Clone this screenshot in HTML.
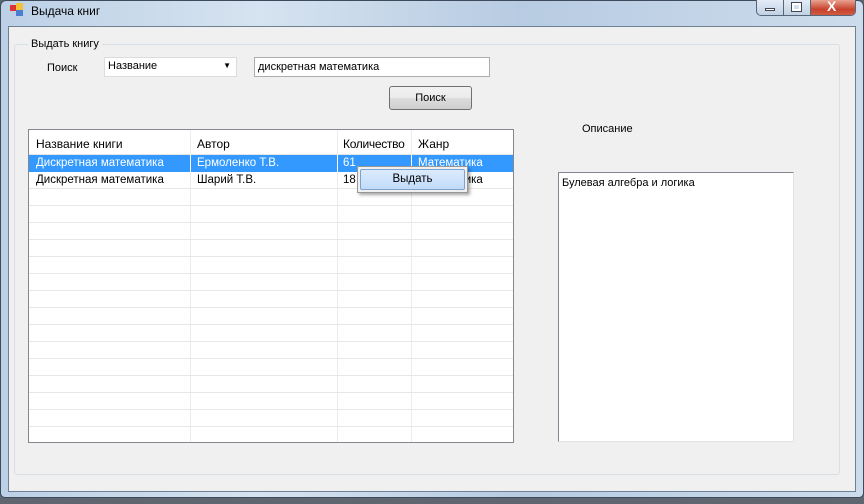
<!DOCTYPE html>
<html><head><meta charset="utf-8"><style>
*{box-sizing:border-box;margin:0;padding:0}
body{width:864px;height:504px;overflow:hidden;background:#5f6670;font-family:"Liberation Sans","Noto Sans CJK SC",sans-serif;font-size:11px;color:#000;position:relative}
.a{position:absolute}
.frame{left:0;top:0;width:864px;height:498px;border-radius:6px 6px 5px 5px;background:linear-gradient(90deg,#bcd0e6,#d6e3f0 30%,#b7cbe2 60%,#cddcec);border:1px solid #3d4b5c}
.client{left:8px;top:26px;width:848px;height:466px;background:#f0f0f0;border:1px solid #6f8093}
.tb{background:#fff;border:1px solid #abadb3}
.row{position:absolute;left:0;width:484px;height:17px;border-bottom:1px solid #e8e8e8;font-size:11.5px}
.vl{position:absolute;top:0;width:1px;height:312px;background:#ececec}
.h{font-size:12px}
</style></head><body>
<div class="a frame"></div>
<div class="a" style="left:10px;top:5px;width:6px;height:6px;background:#d33"></div>
<div class="a" style="left:16px;top:3px;width:7px;height:7px;background:#f2c23b"></div>
<div class="a" style="left:16px;top:10px;width:7px;height:6px;background:#4a7fd0"></div>
<div class="a" style="left:31px;top:4px;font-size:12px">Выдача книг</div>
<div class="a" style="left:756px;top:0;width:100px;height:16px;border:1px solid #55667a;border-top:none;border-radius:0 0 5px 5px;overflow:hidden;background:linear-gradient(#e3ecf6,#c0d1e3)">
<div class="a" style="left:26px;top:0;width:1px;height:16px;background:#55667a"></div>
<div class="a" style="left:53px;top:0;width:46px;height:16px;background:linear-gradient(#e8a28f,#c7412b 60%,#d3604a);border-left:1px solid #55667a"></div>
<div class="a" style="left:8px;top:8px;width:10px;height:3px;background:#fff;border:1px solid #445"></div>
<div class="a" style="left:35px;top:3px;width:9px;height:8px;border:2px solid #fff;outline:1px solid #445"></div>
<div class="a" style="left:70px;top:-2px;color:#fff;font-weight:bold;font-size:14px">X</div>
</div>
<div class="a client"></div>
<div class="a" style="left:14px;top:44px;width:826px;height:431px;border:1px solid #d5dfe5;border-radius:3px"></div>
<div class="a" style="left:28px;top:38px;background:#f0f0f0;padding:0 3px">Выдать книгу</div>
<div class="a" style="left:47px;top:62px">Поиск</div>
<div class="a tb" style="left:104px;top:57px;width:133px;height:20px;border-color:#dcdcdc;padding:2px 3px">Название<span class="a" style="right:5px;top:3px;font-size:8px">▼</span></div>
<div class="a tb" style="left:254px;top:57px;width:236px;height:20px;padding:3px 3px">дискретная математика</div>
<div class="a" style="left:389px;top:86px;width:83px;height:24px;border:1px solid #707070;border-radius:3px;background:linear-gradient(#f2f2f2,#ebebeb 50%,#dddddd 51%,#cfcfcf);text-align:center;line-height:22px">Поиск</div>
<div class="a" style="left:28px;top:129px;width:486px;height:314px;border:1px solid #828790;background:#fff;overflow:hidden">
<div class="a" style="left:0;top:0;width:484px;height:25px;background:#fff;border-bottom:1px solid #e5e5e5"></div>
<div class="vl" style="left:161px"></div><div class="vl" style="left:308px"></div><div class="vl" style="left:382px"></div>
<div class="a h" style="left:7px;top:7px">Название книги</div>
<div class="a h" style="left:168px;top:7px">Автор</div>
<div class="a h" style="left:314px;top:7px;letter-spacing:-0.3px">Количество</div>
<div class="a h" style="left:389px;top:7px">Жанр</div>
<div class="row" style="top:25px;background:#3399ff;border:none;color:#fff"><span class="a" style="left:7px;top:2px">Дискретная математика</span><span class="a" style="left:168px;top:2px">Ермоленко Т.В.</span><span class="a" style="left:314px;top:2px">61</span><span class="a" style="left:389px;top:2px">Математика</span><div class="vl" style="left:161px;height:17px;background:#fff"></div><div class="vl" style="left:308px;height:17px;background:#fff"></div><div class="vl" style="left:382px;height:17px;background:#fff"></div></div>
<div class="row" style="top:42px"><span class="a" style="left:7px;top:2px">Дискретная математика</span><span class="a" style="left:168px;top:2px">Шарий Т.В.</span><span class="a" style="left:314px;top:2px">18</span><span class="a" style="left:389px;top:2px">Математика</span></div>
<div class="row" style="top:59px"></div><div class="row" style="top:76px"></div><div class="row" style="top:93px"></div><div class="row" style="top:110px"></div><div class="row" style="top:127px"></div><div class="row" style="top:144px"></div><div class="row" style="top:161px"></div><div class="row" style="top:178px"></div><div class="row" style="top:195px"></div><div class="row" style="top:212px"></div><div class="row" style="top:229px"></div><div class="row" style="top:246px"></div><div class="row" style="top:263px"></div><div class="row" style="top:280px"></div>
</div>
<div class="a" style="left:357px;top:166px;width:111px;height:27px;background:#f0f0f0;border:1px solid #979797;box-shadow:2px 2px 3px rgba(0,0,0,.35)">
<div class="a" style="left:2px;top:2px;width:105px;height:21px;background:linear-gradient(#dcebfc,#c1dbfa);border:1px solid #7da2ce;border-radius:2px;text-align:center;line-height:19px;font-size:11.5px">Выдать</div></div>
<div class="a" style="left:582px;top:123px">Описание</div>
<div class="a tb" style="left:558px;top:172px;width:236px;height:270px;border-color:#828790 #e3e3e3 #e3e3e3 #828790;padding:4px 3px">Булевая алгебра и логика</div>
</body></html>
